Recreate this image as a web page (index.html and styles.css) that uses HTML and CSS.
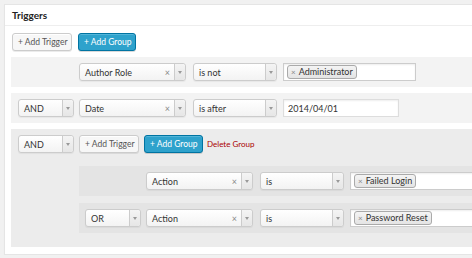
FILE: index.html
```html
<!DOCTYPE html>
<html lang="en">
<head>
    <meta charset="UTF-8">
    <meta name="viewport" content="width=device-width, initial-scale=1.0">
    <title>Triggers</title>
    <link rel="stylesheet" href="styles.css">
</head>
<body>

<div class="postbox">
    <h3 class="postbox-title">Triggers</h3>
    <div class="postbox-inside">
        <div class="toolbar">
            <button class="button">+ Add Trigger</button>
            <button class="button button-primary">+ Add Group</button>
        </div>

        <div class="trigger-row">
            <span class="op-spacer"></span>
            <div class="sel sel-field"><span class="sel-text">Author Role</span><span class="sel-clear">&times;</span><span class="sel-arrow"></span></div>
            <div class="sel sel-compare"><span class="sel-text">is not</span><span class="sel-arrow"></span></div>
            <div class="tags tags-wide"><span class="chip"><span class="chip-x">&times;</span>Administrator</span></div>
        </div>

        <div class="trigger-row">
            <div class="sel sel-op"><span class="sel-text">AND</span><span class="sel-arrow"></span></div>
            <div class="sel sel-field"><span class="sel-text">Date</span><span class="sel-clear">&times;</span><span class="sel-arrow"></span></div>
            <div class="sel sel-compare"><span class="sel-text">is after</span><span class="sel-arrow"></span></div>
            <input type="text" class="text-input" value="2014/04/01">
        </div>

        <div class="trigger-group">
            <div class="group-head">
                <div class="sel sel-op"><span class="sel-text">AND</span><span class="sel-arrow"></span></div>
                <button class="button">+ Add Trigger</button>
                <button class="button button-primary">+ Add Group</button>
                <a href="#" class="delete-group">Delete Group</a>
            </div>
            <div class="group-rows">
                <div class="trigger-row nested">
                    <span class="op-spacer"></span>
                    <div class="sel sel-field"><span class="sel-text">Action</span><span class="sel-clear">&times;</span><span class="sel-arrow"></span></div>
                    <div class="sel sel-compare"><span class="sel-text">is</span><span class="sel-arrow"></span></div>
                    <div class="tags tags-fill"><span class="chip"><span class="chip-x">&times;</span>Failed Login</span></div>
                </div>
                <div class="trigger-row nested">
                    <div class="sel sel-op"><span class="sel-text">OR</span><span class="sel-arrow"></span></div>
                    <div class="sel sel-field"><span class="sel-text">Action</span><span class="sel-clear">&times;</span><span class="sel-arrow"></span></div>
                    <div class="sel sel-compare"><span class="sel-text">is</span><span class="sel-arrow"></span></div>
                    <div class="tags tags-fill"><span class="chip"><span class="chip-x">&times;</span>Password Reset</span></div>
                </div>
            </div>
        </div>
    </div>
</div>

</body>
</html>
```
FILE: styles.css
```css
body {
    font-family: Lato, "Open Sans", sans-serif;
    background-color: #f1f1f1;
    margin: 0;
    padding: 4px 0 0 4px;
    overflow: hidden;
    color: #444;
}
.postbox {
    width: 540px;
    background: #fff;
    border: 1px solid #e5e5e5;
    border-right: none;
    box-shadow: 0 1px 1px rgba(0,0,0,0.04);
}
.postbox-title {
    margin: 0;
    height: 20px;
    line-height: 21px;
    padding: 0 7px;
    font-size: 10px;
    font-weight: bold;
    color: #222;
    border-bottom: 1px solid #eee;
}
.postbox-inside {
    padding: 7px 0 7px 6px;
}
.toolbar {
    display: flex;
    gap: 6px;
    padding-left: 1px;
    margin-bottom: 6px;
}
.button {
    height: 18px;
    padding: 0 5px;
    font-family: inherit;
    font-size: 8.5px;
    color: #555;
    background: #f7f7f7;
    border: 1px solid #ccc;
    border-radius: 3px;
    box-shadow: inset 0 1px 0 #fff, 0 1px 0 rgba(0,0,0,0.08);
    white-space: nowrap;
}
.toolbar .button {
    width: 60px;
}
.toolbar .button-primary {
    width: 58px;
}
.button-primary {
    color: #fff;
    background: #2ea2cc;
    border-color: #0074a2;
    box-shadow: inset 0 1px 0 rgba(120,200,230,0.5), 0 1px 0 rgba(0,0,0,0.15);
}
.trigger-row {
    display: flex;
    align-items: center;
    padding: 6px 7px;
    margin-bottom: 6px;
    background: #f3f3f3;
}
.op-spacer {
    width: 61px;
    flex: none;
}
.sel {
    display: flex;
    align-items: center;
    box-sizing: border-box;
    height: 18px;
    flex: none;
    border: 1px solid #ccc;
    border-radius: 3px;
    background: linear-gradient(#fff, #f3f3f3);
    box-shadow: 0 1px 1px rgba(0,0,0,0.05);
    font-size: 9px;
    color: #333;
}
.sel-op {
    width: 56px;
    margin-right: 5px;
}
.sel-field {
    width: 107px;
    margin-right: 7px;
}
.sel-compare {
    width: 84px;
    margin-right: 6px;
}
.sel-text {
    flex: 1;
    padding-left: 5px;
    white-space: nowrap;
}
.sel-clear {
    color: #888;
    font-size: 9px;
    margin-right: 4px;
}
.sel-arrow {
    width: 10px;
    height: 100%;
    border-left: 1px solid #ccc;
    border-radius: 0 3px 3px 0;
    background: linear-gradient(#f4f4f4, #e6e6e6);
    display: flex;
    align-items: center;
    justify-content: center;
}
.sel-arrow::after {
    content: "";
    border-left: 2px solid transparent;
    border-right: 2px solid transparent;
    border-top: 3px solid #999;
}
.tags {
    display: flex;
    align-items: center;
    box-sizing: border-box;
    height: 18px;
    padding-left: 3px;
    background: #fff;
    border: 1px solid #ccc;
    box-shadow: inset 0 1px 2px rgba(0,0,0,0.07);
}
.tags-wide {
    width: 133px;
}
.tags-fill {
    width: 160px;
}
.chip {
    height: 14px;
    box-sizing: border-box;
    line-height: 12px;
    padding: 0 3px 0 3px;
    font-size: 9px;
    color: #333;
    border: 1px solid #aaa;
    border-radius: 3px;
    background: linear-gradient(#f4f4f4, #e4e4e4);
    white-space: nowrap;
}
.chip-x {
    color: #888;
    font-size: 8px;
    margin-right: 3px;
}
.text-input {
    box-sizing: border-box;
    width: 116px;
    height: 18px;
    margin: 0;
    padding: 0 4px;
    font-family: inherit;
    font-size: 9px;
    color: #333;
    border: 1px solid #ddd;
    box-shadow: inset 0 1px 2px rgba(0,0,0,0.07);
}
.trigger-group {
    background: #ececec;
    padding: 6px 0 7px 7px;
}
.group-head {
    display: flex;
    align-items: center;
    gap: 5px;
}
.group-head .sel-op {
    margin-right: 0;
}
.group-head .button {
    width: 60px;
}
.group-head .button-primary {
    width: 59px;
}
.delete-group {
    color: #a00;
    font-size: 8px;
    text-decoration: none;
    margin-left: -1px;
}
.group-rows {
    margin: 13px 0 0 61px;
}
.trigger-row.nested {
    background: #e4e4e4;
    padding: 6px;
    margin-bottom: 7px;
}
```
